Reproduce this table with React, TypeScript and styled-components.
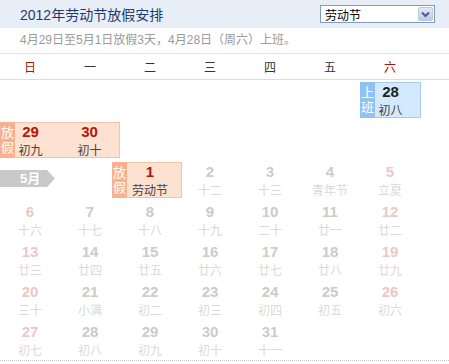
import styled, { createGlobalStyle } from "styled-components";

const GlobalStyle = createGlobalStyle`
  body {
    margin: 0;
    background: #fff;
    font-family: "Liberation Sans", "Noto Sans CJK SC", sans-serif;
  }
`;

type Day = { n: number; lunar: string };
type Tone = "rest" | "work";
type Item =
  | { kind: "range"; col: number; tone: Tone; days: Day[]; padL: number; padR: number }
  | { kind: "day"; col: number; day: Day }
  | { kind: "month"; col: number; span: number; label: string };

const d = (n: number, lunar: string): Day => ({ n, lunar });

const plainRow = (start: number, lunars: string[]): Item[] =>
  lunars.map((l, i) => ({ kind: "day", col: i, day: d(start + i, l) }));

const weeks: Item[][] = [
  [{ kind: "range", col: 6, tone: "work", days: [d(28, "初八")], padL: 0, padR: 1 }],
  [{ kind: "range", col: 0, tone: "rest", days: [d(29, "初九"), d(30, "初十")], padL: 0, padR: 0 }],
  [
    { kind: "month", col: 0, span: 2, label: "5月" },
    { kind: "range", col: 2, tone: "rest", days: [d(1, "劳动节")], padL: 8, padR: 2 },
    { kind: "day", col: 3, day: d(2, "十二") },
    { kind: "day", col: 4, day: d(3, "十三") },
    { kind: "day", col: 5, day: d(4, "青年节") },
    { kind: "day", col: 6, day: d(5, "立夏") },
  ],
  plainRow(6, ["十六", "十七", "十八", "十九", "二十", "廿一", "廿二"]),
  plainRow(13, ["廿三", "廿四", "廿五", "廿六", "廿七", "廿八", "廿九"]),
  plainRow(20, ["三十", "小满", "初二", "初三", "初四", "初五", "初六"]),
  plainRow(27, ["初七", "初八", "初九", "初十", "十一"]),
];

const weekdays = ["日", "一", "二", "三", "四", "五", "六"];

const Page = styled.div`
  width: 449px;
  height: 364px;
  overflow: hidden;
`;

const Header = styled.div`
  height: 28px;
  background: #e8eef8;
  display: flex;
  align-items: center;
  justify-content: space-between;
  padding: 0 14px 0 20px;
`;

const Title = styled.h1`
  margin: 0;
  font-size: 14px;
  font-weight: normal;
  color: #1d3b6d;
`;

const Select = styled.div`
  box-sizing: border-box;
  width: 115px;
  height: 18px;
  border: 1px solid #7f9db9;
  background: #fff;
  display: flex;
  align-items: center;
  justify-content: space-between;
  padding: 0 1px 0 4px;
  font-size: 12px;
  color: #000;
`;

const SelectArrow = styled.span`
  box-sizing: border-box;
  width: 15px;
  height: 14px;
  border: 1px solid #b8c8e6;
  border-radius: 2px;
  background: linear-gradient(#e2e9f7, #bccbe8);
  display: flex;
  align-items: center;
  justify-content: center;
`;

const Notice = styled.div`
  height: 25px;
  line-height: 25px;
  padding-left: 20px;
  font-size: 12px;
  color: #9a9a9a;
  border-bottom: 1px solid #e2e2e2;
`;

const WeekHead = styled.div`
  display: grid;
  grid-template-columns: repeat(7, 60px);
  height: 25px;
  align-items: center;
  border-bottom: 1px solid #dcdcdc;
`;

const WeekName = styled.span<{ $weekend: boolean }>`
  text-align: center;
  font-size: 12px;
  color: ${(p) => (p.$weekend ? "#a3140e" : "#333")};
`;

const Calendar = styled.div`
  border-bottom: 1px dotted #c8c8c8;
`;

const Week = styled.div`
  display: grid;
  grid-template-columns: repeat(7, 60px);
  height: 40px;
`;

const Cell = styled.div<{ $inset?: boolean }>`
  width: 60px;
  display: flex;
  flex-direction: column;
  align-items: center;
  padding-top: ${(p) => (p.$inset ? "1px" : "4px")};
  box-sizing: border-box;
`;

const Num = styled.span<{ $tone: "rest" | "work" | "faded" | "fadedWeekend" }>`
  font-size: 15px;
  line-height: 16px;
  font-weight: bold;
  color: ${(p) =>
    p.$tone === "rest"
      ? "#b5160c"
      : p.$tone === "work"
      ? "#1e1e1e"
      : p.$tone === "fadedWeekend"
      ? "#ebc7c7"
      : "#cbcbcb"};
`;

const Lunar = styled.span<{ $faded: boolean }>`
  margin-top: 3px;
  font-size: 12px;
  line-height: 16px;
  color: ${(p) => (p.$faded ? "#dadada" : "#444")};
  white-space: nowrap;
`;

const tones = {
  rest: { bg: "#fde1d1", border: "#f6c1a6", label: "#f8b18e" },
  work: { bg: "#d4e9fd", border: "#a6cbef", label: "#8fc2f2" },
};

const Range = styled.div<{ $col: number; $span: number; $tone: Tone; $padL: number; $padR: number }>`
  position: relative;
  grid-column: ${(p) => `${p.$col + 1} / span ${p.$span}`};
  margin: 2px ${(p) => -p.$padR}px 2px ${(p) => -p.$padL}px;
  padding-left: ${(p) => p.$padL - 1}px;
  box-sizing: border-box;
  height: 36px;
  display: flex;
  background: ${(p) => tones[p.$tone].bg};
  border: 1px solid ${(p) => tones[p.$tone].border};
`;

const RangeLabel = styled.span<{ $tone: Tone }>`
  position: absolute;
  left: -1px;
  top: -1px;
  bottom: -1px;
  width: 15px;
  background: ${(p) => tones[p.$tone].label};
  color: #fff;
  font-size: 13px;
  line-height: 15px;
  display: flex;
  flex-direction: column;
  align-items: center;
  justify-content: center;
`;

const MonthTag = styled.div<{ $col: number; $span: number }>`
  grid-column: ${(p) => `${p.$col + 1} / span ${p.$span}`};
  align-self: start;
  justify-self: start;
  margin-top: 10px;
  width: 55px;
  height: 17px;
  line-height: 17px;
  padding-left: 20px;
  box-sizing: border-box;
  background: #c9c9c9;
  color: #fff;
  font-size: 13px;
  font-weight: bold;
  clip-path: polygon(0 0, 47px 0, 55px 50%, 47px 100%, 0 100%);
`;

const DayCell = ({ day, col }: { day: Day; col: number }) => {
  const weekend = col === 0 || col === 6;
  return (
    <Cell style={{ gridColumn: col + 1 }}>
      <Num $tone={weekend ? "fadedWeekend" : "faded"}>{day.n}</Num>
      <Lunar $faded>{day.lunar}</Lunar>
    </Cell>
  );
};

const labels: Record<Tone, string[]> = { rest: ["放", "假"], work: ["上", "班"] };

const App = () => {
  return (
    <Page>
      <GlobalStyle />
      <Header>
        <Title>2012年劳动节放假安排</Title>
        <Select>
          劳动节
          <SelectArrow>
            <svg width="9" height="7" viewBox="0 0 9 7">
              <path d="M1 1.5 L4.5 5 L8 1.5" fill="none" stroke="#4a5d86" strokeWidth="2" />
            </svg>
          </SelectArrow>
        </Select>
      </Header>
      <Notice>4月29日至5月1日放假3天，4月28日（周六）上班。</Notice>
      <WeekHead>
        {weekdays.map((w, i) => (
          <WeekName key={w} $weekend={i === 0 || i === 6}>
            {w}
          </WeekName>
        ))}
      </WeekHead>
      <Calendar>
        {weeks.map((items, r) => (
          <Week key={r}>
            {items.map((it, k) => {
              if (it.kind === "month")
                return (
                  <MonthTag key={k} $col={it.col} $span={it.span}>
                    {it.label}
                  </MonthTag>
                );
              if (it.kind === "range")
                return (
                  <Range
                    key={k}
                    $col={it.col}
                    $span={it.days.length}
                    $tone={it.tone}
                    $padL={it.padL}
                    $padR={it.padR}
                  >
                    <RangeLabel $tone={it.tone}>
                      {labels[it.tone].map((c) => (
                        <span key={c}>{c}</span>
                      ))}
                    </RangeLabel>
                    {it.days.map((day) => (
                      <Cell key={day.n} $inset>
                        <Num $tone={it.tone}>{day.n}</Num>
                        <Lunar $faded={false}>{day.lunar}</Lunar>
                      </Cell>
                    ))}
                  </Range>
                );
              return <DayCell key={k} day={it.day} col={it.col} />;
            })}
          </Week>
        ))}
      </Calendar>
    </Page>
  );
};

export default App;
